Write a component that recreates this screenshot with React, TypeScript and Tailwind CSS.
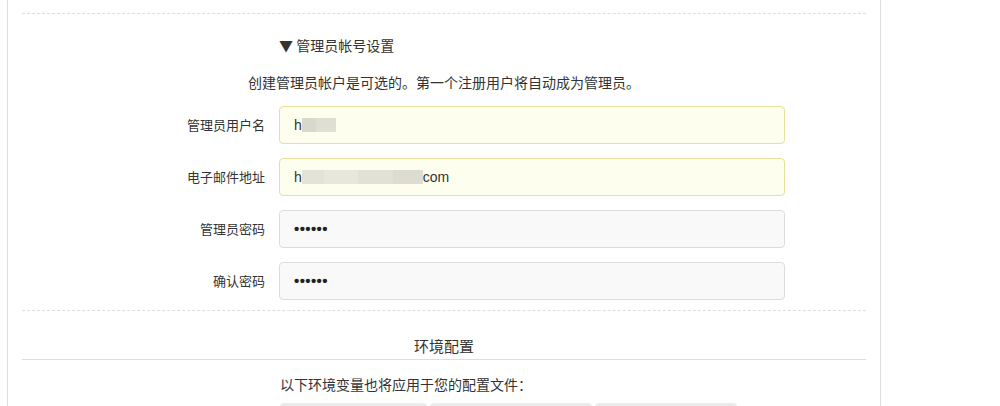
const font = { fontFamily: '"Noto Sans CJK SC", "Noto Sans", sans-serif' };
const latin = { fontFamily: '"Liberation Sans", Arial, sans-serif' };

interface FieldProps {
  label: string;
  filled?: boolean;
  children: React.ReactNode;
}

function Field({ label, filled, children }: FieldProps) {
  return (
    <div className="flex items-center">
      <label className="w-[243px] shrink-0 text-right text-[13px] text-[#333]">{label}</label>
      <div
        className={
          "ml-[14px] flex h-[38px] w-[506px] items-center rounded-[4px] border px-[14px] text-[14px] text-[#333] " +
          (filled ? "border-[#e6dfa0] bg-[#fefeee]" : "border-[#dcdcdc] bg-[#f9f9f9]")
        }
      >
        {children}
      </div>
    </div>
  );
}

function Smudge({ w, shade = "bg-[#dcdcd0]" }: { w: number; shade?: string }) {
  return <span className={"inline-block h-[14px] " + shade} style={{ width: w }} />;
}

function Dots() {
  return (
    <span className="text-[15px] font-bold tracking-[0.4px] text-[#222]" style={latin}>
      ••••••
    </span>
  );
}

export default function App() {
  return (
    <div className="h-[406px] overflow-hidden bg-white" style={font}>
      <div className="ml-[7px] h-full w-[874px] border-x border-[#dddddd] px-[14px] pt-[13px]">
        <div className="border-t border-dashed border-[#dddddd]" />

        <div className="mt-[21px] pl-[257px] text-[14px] leading-[20px] text-[#333]">▼ 管理员帐号设置</div>

        <p className="mt-[17px] text-center text-[14px] leading-[20px] text-[#333]">
          创建管理员帐户是可选的。第一个注册用户将自动成为管理员。
        </p>

        <div className="mt-[14px] flex flex-col gap-[14px]">
          <Field label="管理员用户名" filled>
            <span style={latin}>h</span>
            <span className="flex items-center">
              <Smudge w={14} shade="bg-[#d8d8cc]" />
              <Smudge w={20} shade="bg-[#e0dfd4]" />
            </span>
          </Field>
          <Field label="电子邮件地址" filled>
            <span style={latin}>h</span>
            <span className="flex items-center">
              <Smudge w={22} shade="bg-[#e4e3d8]" />
              <Smudge w={34} shade="bg-[#e8e7dd]" />
              <Smudge w={35} shade="bg-[#e2e1d6]" />
              <Smudge w={30} shade="bg-[#dedcd2]" />
            </span>
            <span style={latin}>com</span>
          </Field>
          <Field label="管理员密码">
            <Dots />
          </Field>
          <Field label="确认密码">
            <Dots />
          </Field>
        </div>

        <div className="mt-[10px] border-t border-dashed border-[#dddddd]" />

        <div className="mt-[25px] text-center text-[15px] leading-[20px] text-[#333]">环境配置</div>
        <div className="mt-[3px] border-t border-[#dddddd]" />

        <div className="mt-[14px] pl-[258px] text-[14px] leading-[20px] text-[#333]">
          以下环境变量也将应用于您的配置文件：
        </div>

        <div className="mt-[9px] flex gap-[3px] pl-[258px]">
          <div className="h-[20px] w-[147px] rounded-t-[4px] bg-[#ebebeb]" />
          <div className="h-[20px] w-[162px] rounded-t-[4px] bg-[#ebebeb]" />
          <div className="h-[20px] w-[142px] rounded-t-[4px] bg-[#ebebeb]" />
        </div>
      </div>
    </div>
  );
}
